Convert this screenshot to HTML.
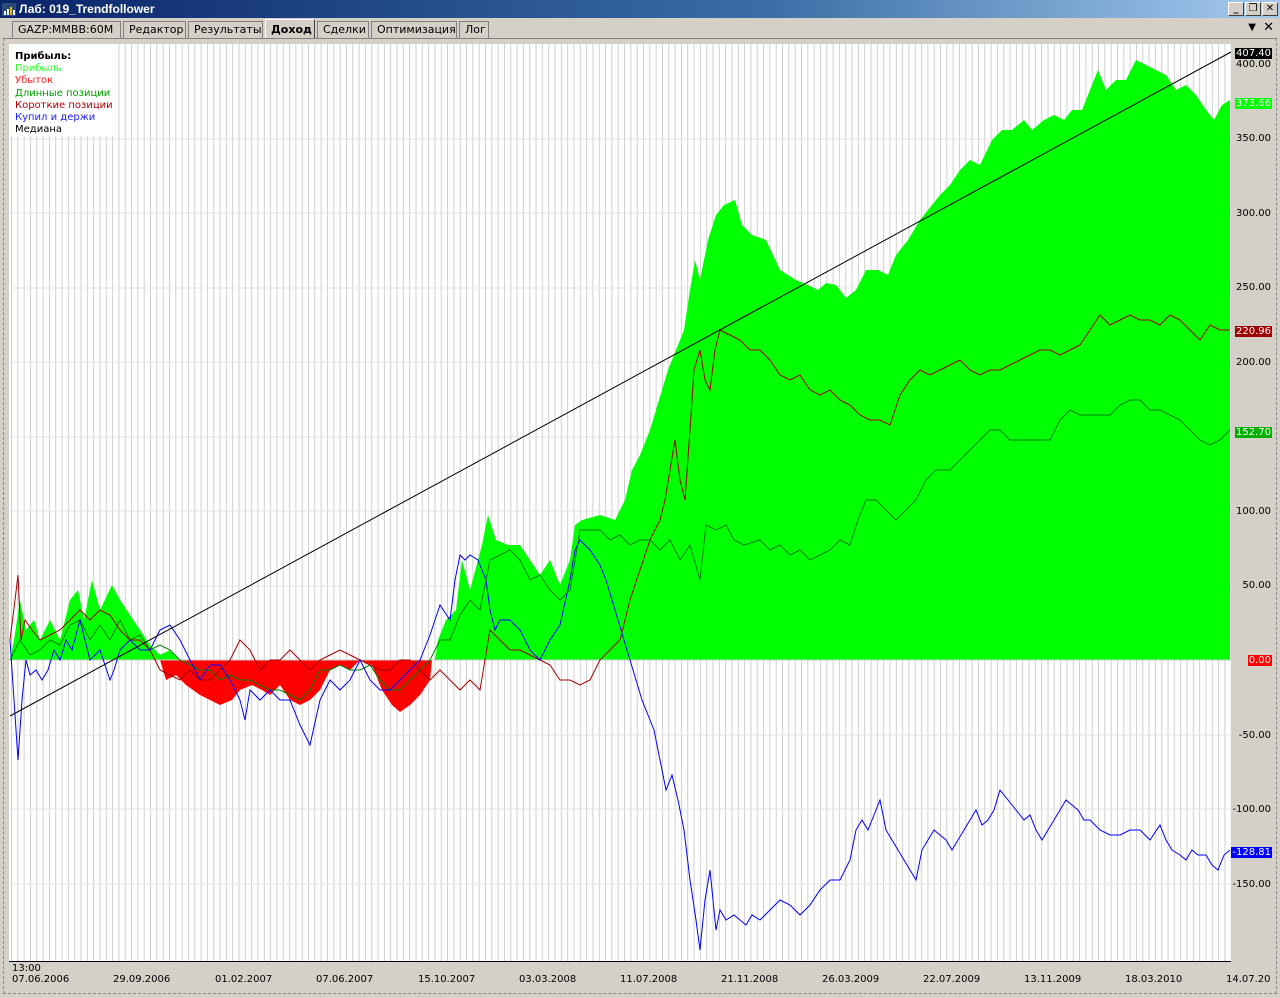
<!DOCTYPE html>
<html><head><meta charset="utf-8"><style>
*{margin:0;padding:0;box-sizing:border-box}
body{width:1280px;height:998px;overflow:hidden;background:#d4d0c8;font-family:"DejaVu Sans","Liberation Sans",sans-serif;position:relative}
.title{position:absolute;left:0;top:0;width:1280px;height:18px;background:linear-gradient(90deg,#0a246a 0%,#3a6ea5 60%,#a6caf0 100%);color:#fff;font-weight:bold;font-size:12px;line-height:18px;padding-left:19px;font-family:"Liberation Sans",sans-serif}
.tb{position:absolute;top:2px;width:16px;height:14px;background:#d4d0c8;border:1px solid;border-color:#fff #404040 #404040 #fff;font-size:10px;line-height:12px;text-align:center;color:#000;font-weight:bold}
.tabs{position:absolute;top:21px;left:12px;height:17px;font-size:11px}
.tab{position:absolute;top:0;height:17px;border:1px solid #808080;border-bottom:none;background:#d4d0c8;line-height:16px;padding:0 5px;color:#000;white-space:nowrap}
.ax{position:absolute;right:8px;font-size:10px;color:#000;text-align:right;line-height:11px;padding:0 1px}
.bx{position:absolute;top:974px;font-size:10px;color:#000}
.lg{position:absolute;left:15px;font-size:10px;line-height:12.3px}
</style></head><body>
<div class="title"><svg style="position:absolute;left:2px;top:3px" width="14" height="13"><rect width="14" height="13" fill="#2a4a7a"/><rect x="2" y="8" width="2" height="4" fill="#fff"/><rect x="5" y="6" width="2" height="6" fill="#fff"/><rect x="8" y="4" width="2" height="8" fill="#f0c000"/><rect x="11" y="7" width="2" height="5" fill="#fff"/></svg>Лаб: 019_Trendfollower</div>
<div class="tb" style="left:1228px">_</div><div class="tb" style="left:1245px">❐</div><div class="tb" style="left:1262px">✕</div>
<div class="tabs">
<div class="tab" style="left:0;width:109px">GAZP:MMBB:60M</div>
<div class="tab" style="left:111px;width:63px">Редактор</div>
<div class="tab" style="left:176px;width:75px">Результаты</div>
<div class="tab" style="left:253px;width:50px;top:-2px;height:20px;font-weight:bold;border-color:#fff #404040 #fff #fff;line-height:19px">Доход</div>
<div class="tab" style="left:305px;width:52px">Сделки</div>
<div class="tab" style="left:359px;width:86px">Оптимизация</div>
<div class="tab" style="left:447px;width:30px">Лог</div>
</div>
<div style="position:absolute;right:24px;top:22px;font-size:10px">▼</div>
<div style="position:absolute;right:6px;top:20px;font-size:13px">✕</div>
<div style="position:absolute;left:3px;top:38px;width:1274px;height:956px;border:1px dashed #888;border-top:1px solid #808080"></div>
<svg style="position:absolute;left:0;top:0" width="1280" height="998">
<defs><pattern id="vg" x="11" y="0" width="6.32" height="998" patternUnits="userSpaceOnUse"><rect x="0" y="0" width="1" height="998" fill="#cfcfcf"/></pattern></defs>
<rect x="9" y="44" width="1222" height="917" fill="#fff"/>
<rect x="10" y="44" width="1221" height="917" fill="url(#vg)"/>
<g stroke="#e4e4e4" stroke-width="1">
<line x1="10" x2="1231" y1="139" y2="139"/><line x1="10" x2="1231" y1="213" y2="213"/><line x1="10" x2="1231" y1="288" y2="288"/><line x1="10" x2="1231" y1="362" y2="362"/><line x1="10" x2="1231" y1="437" y2="437"/><line x1="10" x2="1231" y1="511" y2="511"/><line x1="10" x2="1231" y1="586" y2="586"/><line x1="10" x2="1231" y1="735" y2="735"/><line x1="10" x2="1231" y1="809" y2="809"/><line x1="10" x2="1231" y1="884" y2="884"/></g>
<rect x="10" y="44" width="104" height="92" fill="#fff"/>
<polygon fill="#00ff00" points="10,660 14,640 20,600 26,630 34,620 40,640 50,620 60,640 70,600 78,590 84,620 92,580 100,610 112,585 120,600 130,615 140,630 150,645 160,655 170,650 180,660 435,660 438,640 446,620 456,610 462,560 470,590 482,545 488,515 496,540 508,545 520,545 530,560 540,575 550,560 560,585 570,560 575,525 582,520 600,515 615,520 625,500 632,470 640,455 650,430 656,410 662,390 668,370 676,350 684,330 690,290 695,260 700,280 708,240 716,215 724,205 735,200 742,225 752,235 766,240 780,270 796,280 808,285 818,290 826,283 836,285 846,298 856,290 866,270 878,270 888,275 896,255 908,240 920,220 928,210 940,195 950,185 960,170 970,160 980,165 992,140 1002,130 1012,130 1024,120 1032,130 1044,120 1054,115 1064,120 1072,110 1082,110 1090,90 1098,70 1106,90 1116,80 1126,80 1136,60 1146,65 1156,70 1166,75 1176,90 1186,85 1196,95 1206,110 1214,120 1222,105 1230,100 1230,660"/>
<polygon fill="#ff0000" points="160,660 166,680 176,675 186,685 200,695 210,700 220,705 232,700 240,690 252,685 262,690 270,695 280,685 290,700 300,705 310,700 320,690 330,670 340,665 350,670 360,660 372,665 382,690 392,705 400,712 410,705 420,695 430,680 432,660"/>
<line x1="10" x2="1231" y1="660" y2="660" stroke="#cccccc"/>
<polyline fill="none" stroke="#008000" stroke-width="1" points="10,660 20,640 30,655 40,650 50,640 60,645 70,625 80,620 90,640 100,625 110,640 120,620 130,640 140,635 150,650 160,645 170,650 180,660 190,665 200,670 210,670 220,680 230,675 240,680 250,680 260,685 270,690 280,690 290,695 300,700 310,690 320,670 330,670 340,665 350,670 360,670 370,665 380,680 390,690 400,690 410,680 420,670 430,660 440,640 450,640 460,615 470,600 480,610 490,560 500,555 510,550 520,560 530,580 540,575 550,590 560,600 570,590 580,530 600,530 610,540 620,535 630,545 640,540 650,540 660,550 670,540 680,560 690,545 700,580 706,525 716,530 726,525 734,540 744,545 760,540 770,550 780,545 790,555 800,550 810,560 820,555 830,550 840,540 850,545 858,520 866,500 876,500 886,510 896,520 906,510 916,500 926,480 936,470 950,470 960,460 970,450 980,440 990,430 1000,430 1010,440 1020,440 1030,440 1040,440 1050,440 1060,420 1070,410 1080,415 1090,415 1100,415 1110,415 1120,405 1130,400 1140,400 1150,410 1160,410 1170,415 1180,420 1190,430 1200,440 1210,445 1220,440 1230,430"/>
<polyline fill="none" stroke="#a00000" stroke-width="1" points="10,640 15,600 18,575 21,640 25,620 32,630 40,640 50,635 60,630 70,620 80,610 90,620 100,610 110,615 120,630 130,640 140,640 150,650 160,670 170,675 180,680 190,670 200,680 210,680 220,670 230,660 240,640 250,650 260,670 270,660 280,660 290,650 300,660 310,670 320,660 330,655 340,650 350,655 360,660 370,665 380,670 390,670 400,660 410,660 420,670 430,680 440,670 450,680 460,690 470,680 480,690 485,660 490,630 500,640 510,650 520,650 530,655 540,660 550,665 560,680 570,680 580,685 590,680 600,660 610,650 620,640 630,600 640,570 650,540 660,520 665,500 670,470 675,440 680,480 685,500 690,430 694,370 700,350 705,380 710,390 715,350 720,330 730,335 740,340 750,350 760,350 770,360 780,375 790,380 800,375 810,390 820,395 830,390 840,400 850,405 860,415 870,420 880,420 890,425 895,410 900,395 910,380 920,370 930,375 940,370 950,365 960,360 970,370 980,375 990,370 1000,370 1010,365 1020,360 1030,355 1040,350 1050,350 1060,355 1070,350 1080,345 1090,330 1100,315 1110,325 1120,320 1130,315 1140,320 1150,320 1160,325 1170,315 1180,320 1190,330 1200,340 1210,325 1220,330 1230,330"/>
<polyline fill="none" stroke="#0000ff" stroke-width="1" points="10,640 14,700 18,760 22,700 26,660 30,675 36,670 42,680 48,670 54,650 60,660 66,640 72,650 80,620 90,660 100,650 110,680 114,670 120,650 130,640 140,650 150,650 160,630 170,625 180,640 190,660 200,680 210,665 220,665 230,680 240,700 245,720 250,690 260,700 270,690 280,700 290,700 300,725 310,745 320,700 330,680 340,690 350,680 360,660 370,680 380,690 390,690 400,680 410,670 420,660 430,635 440,605 450,620 455,580 460,555 465,560 470,555 478,560 486,580 490,610 495,630 500,620 510,620 520,630 530,650 540,660 550,640 560,625 570,580 575,550 580,540 590,550 600,565 606,580 612,600 618,620 624,640 630,660 636,680 642,700 648,715 654,730 660,760 666,790 672,775 678,800 684,830 690,880 696,920 700,950 705,900 710,870 716,930 720,910 726,920 734,915 740,920 746,925 752,915 760,920 770,910 780,900 790,905 800,915 810,905 820,890 830,880 840,880 850,860 856,830 862,820 868,830 874,815 880,800 886,830 892,840 898,850 904,860 910,870 916,880 922,850 928,840 934,830 940,835 946,840 952,850 958,840 964,830 970,820 976,810 982,825 988,820 994,810 1000,790 1008,800 1016,810 1024,820 1030,815 1036,830 1042,840 1048,830 1054,820 1060,810 1066,800 1072,805 1078,810 1084,820 1090,820 1100,830 1110,835 1120,835 1130,830 1140,830 1150,840 1160,825 1166,840 1172,850 1180,855 1186,860 1192,850 1198,855 1206,855 1212,865 1218,870 1224,855 1230,850"/>
<line x1="10" y1="716" x2="1231" y2="52" stroke="#000" stroke-width="1"/>
<rect x="1231" y="44" width="45" height="917" fill="#d4d0c8"/>
<rect x="9" y="961" width="1267" height="30" fill="#d4d0c8"/>
<line x1="9" x2="1231" y1="961.5" y2="961.5" stroke="#000"/>
</svg>
<div class="lg" style="top:51px;font-weight:bold;color:#000">Прибыль:</div>
<div class="lg" style="top:63px;color:#33ff33">Прибыль</div>
<div class="lg" style="top:75px;color:#ff2222">Убыток</div>
<div class="lg" style="top:88px;color:#00a000">Длинные позиции</div>
<div class="lg" style="top:100px;color:#b00000">Короткие позиции</div>
<div class="lg" style="top:112px;color:#2020ff">Купил и держи</div>
<div class="lg" style="top:124px;color:#000">Медиана</div>
<div class="ax" style="top:48px;background:#000;color:#fff">407.40</div>
<div class="ax" style="top:59px">400.00</div>
<div class="ax" style="top:98px;background:#00ff00;color:#fff">373.66</div>
<div class="ax" style="top:133px">350.00</div>
<div class="ax" style="top:208px">300.00</div>
<div class="ax" style="top:282px">250.00</div>
<div class="ax" style="top:326px;background:#a00000;color:#fff">220.96</div>
<div class="ax" style="top:357px">200.00</div>
<div class="ax" style="top:427px;background:#00b000;color:#fff">152.70</div>
<div class="ax" style="top:506px">100.00</div>
<div class="ax" style="top:580px">50.00</div>
<div class="ax" style="top:655px;background:#ff0000;color:#fff">0.00</div>
<div class="ax" style="top:730px">-50.00</div>
<div class="ax" style="top:804px">-100.00</div>
<div class="ax" style="top:847px;background:#0000ff;color:#fff">-128.81</div>
<div class="ax" style="top:879px">-150.00</div>
<div class="bx" style="left:12px;top:963px">13:00</div>
<div class="bx" style="left:12px">07.06.2006</div>
<div class="bx" style="left:113px">29.09.2006</div>
<div class="bx" style="left:215px">01.02.2007</div>
<div class="bx" style="left:316px">07.06.2007</div>
<div class="bx" style="left:418px">15.10.2007</div>
<div class="bx" style="left:519px">03.03.2008</div>
<div class="bx" style="left:620px">11.07.2008</div>
<div class="bx" style="left:721px">21.11.2008</div>
<div class="bx" style="left:822px">26.03.2009</div>
<div class="bx" style="left:923px">22.07.2009</div>
<div class="bx" style="left:1024px">13.11.2009</div>
<div class="bx" style="left:1125px">18.03.2010</div>
<div class="bx" style="left:1226px">14.07.20</div>
</body></html>
